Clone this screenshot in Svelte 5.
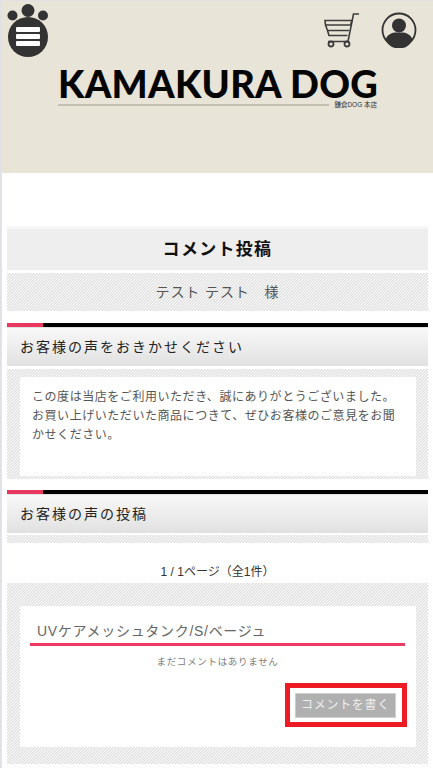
<script>
  const jp = 'コメント投稿';
</script>

<div class="page">
  <header class="banner">
    <div class="top">
      <svg class="paw" width="50" height="60" viewBox="0 0 50 60" aria-label="メニュー">
        <circle cx="28" cy="37" r="20" fill="#333" />
        <circle cx="28" cy="10.5" r="6.5" fill="#333" />
        <circle cx="12.5" cy="15.5" r="5" fill="#333" />
        <circle cx="43" cy="15.5" r="5" fill="#333" />
        <rect x="16" y="27" width="24" height="5" rx="1" fill="#fff" />
        <rect x="16" y="34" width="24" height="5" rx="1" fill="#fff" />
        <rect x="16" y="41" width="24" height="5" rx="1" fill="#fff" />
      </svg>
      <div class="actions">
        <svg width="40" height="40" viewBox="0 0 40 40" aria-label="カート" fill="none" stroke="#3c3c3c">
          <path d="M37 5h-5.500l-5.500 27.500h-20" stroke-width="1.600" />
          <path d="M3 11.500h27l-1.500 4.500h-25zM3.500 16l2 5.500h21.500M5.500 21.500l1.500 5h18.500" stroke-width="1.600" />
          <circle cx="9" cy="35" r="2.500" stroke-width="1.800" />
          <circle cx="25" cy="35" r="2.500" stroke-width="1.800" />
        </svg>
        <svg width="36" height="36" viewBox="0 0 36 36" aria-label="マイページ">
          <circle cx="18" cy="18" r="16.500" fill="none" stroke="#333" stroke-width="1.800" />
          <circle cx="18" cy="13.500" r="7" fill="#333" />
          <path d="M4.500 28c1.500-5.500 6-7 9-7.500h9c3 .5 7.500 2 9 7.500a15 15 0 0 1-27 0z" fill="#333" />
        </svg>
      </div>
    </div>
    <div class="logo">
      <div class="wordmark">KAMAKURA DOG</div>
      <div class="subline"><span class="rule"></span><span class="shop">鎌倉DOG 本店</span></div>
    </div>
  </header>

  <main class="content">
    <h1 class="title">{jp}</h1>
    <div class="hatch customer">テスト テスト　様</div>

    <section class="section first">
      <div class="bar"></div>
      <h2 class="head">お客様の声をおきかせください</h2>
      <div class="hatch intro">
        <p class="panel message">この度は当店をご利用いただき、誠にありがとうございました。<br />お買い上げいただいた商品につきて、ぜひお客様のご意見をお聞かせください。</p>
      </div>
    </section>

    <section class="section second">
      <div class="bar"></div>
      <h2 class="head">お客様の声の投稿</h2>
      <div class="hatch strip"></div>
    </section>

    <div class="paging">1 / 1ページ（全1件）</div>

    <div class="hatch product">
      <div class="panel card">
        <div class="name">UVケアメッシュタンク/S/ベージュ</div>
        <div class="none">まだコメントはありません</div>
        <div class="cta">
          <div class="highlight"><button class="write">コメントを書く</button></div>
        </div>
      </div>
    </div>
  </main>
</div>

<style>
  :global(body) {
    margin: 0;
    background: #fff;
  }
  .page {
    height: 768px;
    overflow: hidden;
    box-sizing: border-box;
    border-left: 2px solid #e1e1e8;
    border-top: 1px solid #e1e1e8;
    font-family: "Liberation Sans", "Noto Sans CJK JP", sans-serif;
    color: #333;
  }
  .banner {
    height: 172px;
    background: #e8e4d8;
  }
  .top {
    display: flex;
    justify-content: space-between;
    height: 66px;
  }
  .paw {
    margin-left: -2px;
    margin-top: -1px;
  }
  .actions {
    display: flex;
    align-items: flex-start;
    gap: 19px;
    padding: 8px 16px 0 0;
  }
  .actions svg:last-child {
    margin-top: 3px;
  }
  .logo {
    width: 319px;
    margin-left: 56px;
  }
  .wordmark {
    font-family: Lato, sans-serif;
    font-weight: 900;
    font-size: 38px;
    line-height: 33px;
    color: #050505;
    white-space: nowrap;
    letter-spacing: 0.250px;
  }
  .subline {
    display: flex;
    align-items: center;
    gap: 5px;
    height: 6px;
    margin-top: 2px;
  }
  .rule {
    flex: 1;
    height: 2px;
    background: #c4c0b2;
  }
  .shop {
    font-size: 6.500px;
    line-height: 6px;
    color: #333;
    white-space: nowrap;
  }
  .content {
    margin: 53px 5px 0;
    border-top: 3px solid #f6f6f6;
  }
  .title {
    margin: 0;
    height: 41px;
    background: #eee;
    text-align: center;
    font-size: 17px;
    font-weight: 700;
    line-height: 42px;
    letter-spacing: 1.300px;
    color: #111;
  }
  .hatch {
    background: repeating-linear-gradient(135deg, #e4e4e4 0 1.060px, #fbfbfb 1.060px 2.120px);
  }
  .customer {
    margin-top: 3px;
    height: 38px;
    text-align: center;
    font-size: 14px;
    line-height: 39px;
    letter-spacing: 0.900px;
    color: #555;
  }
  .section.first {
    margin-top: 12px;
  }
  .section.second {
    margin-top: 11px;
  }
  .bar {
    height: 4px;
    background: linear-gradient(to right, #e8385f 36px, #000 36px);
  }
  .head {
    margin: 0;
    height: 39px;
    box-sizing: border-box;
    border-top: 1px solid #e2e2e2;
    padding-left: 13px;
    background: linear-gradient(#f8f8f8, #e1e1e1);
    font-size: 14px;
    font-weight: 400;
    line-height: 38px;
    letter-spacing: 2px;
    color: #222;
  }
  .intro {
    margin-top: 3px;
    padding: 8px 12px 3px 13px;
  }
  .panel {
    margin: 0;
    background: #fff;
  }
  .message {
    height: 99px;
    box-sizing: border-box;
    padding: 11px 12px 0 12px;
    font-size: 12px;
    line-height: 19.200px;
    letter-spacing: 0.550px;
    color: #555;
  }
  .strip {
    height: 8px;
    margin-top: 2px;
  }
  .paging {
    margin-top: 21px;
    text-align: center;
    font-size: 12px;
    line-height: 16px;
    color: #333;
  }
  .product {
    margin-top: 3px;
    padding: 23px 12px 17px 13px;
  }
  .card {
    height: 141px;
    box-sizing: border-box;
    padding: 15px 11px 0 10px;
  }
  .name {
    height: 22px;
    padding-left: 7px;
    border-bottom: 3px solid #ee3a62;
    font-size: 14px;
    line-height: 20px;
    letter-spacing: 0.700px;
    color: #666;
  }
  .none {
    margin-top: 9px;
    text-align: center;
    font-size: 9.500px;
    line-height: 14px;
    letter-spacing: 0.700px;
    color: #808080;
  }
  .cta {
    display: flex;
    justify-content: flex-end;
    margin-top: 14px;
    margin-right: -2px;
  }
  .highlight {
    border: 5px solid #ed1c24;
    padding: 5px 6px 4px 5px;
  }
  .write {
    display: block;
    width: 101px;
    height: 25px;
    padding: 0;
    box-sizing: border-box;
    border: 1px solid #d0d0d0;
    background: #b0b0b0;
    color: #eee;
    font-family: inherit;
    font-size: 12px;
    line-height: 21px;
    letter-spacing: 0.700px;
  }
</style>
